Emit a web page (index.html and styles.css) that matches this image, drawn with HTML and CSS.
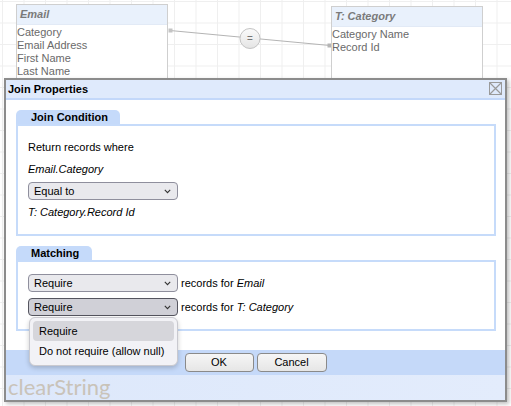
FILE: index.html
```html
<!DOCTYPE html>
<html>
<head>
<meta charset="utf-8">
<link rel="stylesheet" href="styles.css">
</head>
<body>
<div class="canvas">
  <svg class="links" width="511" height="406" viewBox="0 0 511 406">
    <defs>
      <linearGradient id="cg" x1="0" y1="0" x2="0" y2="1">
        <stop offset="0" stop-color="#fbfbfb"/>
        <stop offset="1" stop-color="#e4e4e4"/>
      </linearGradient>
    </defs>
    <line x1="170" y1="30.5" x2="330" y2="45.5" stroke="#b4b4b4" stroke-width="1.2"/>
    <rect x="168.5" y="28.5" width="4" height="4" fill="#c4c4c4"/>
    <rect x="327.5" y="43.5" width="4" height="4" fill="#b4b4b4"/>
    <circle cx="250" cy="38.5" r="10" fill="url(#cg)" stroke="#c4c4c4" stroke-width="1"/>
    <text x="250" y="42" text-anchor="middle" class="eq">=</text>
  </svg>
  <div class="table t-email">
    <div class="thead">Email</div>
    <div class="trows">
      <div>Category</div>
      <div>Email Address</div>
      <div>First Name</div>
      <div>Last Name</div>
    </div>
  </div>
  <div class="table t-cat">
    <div class="thead">T: Category</div>
    <div class="trows">
      <div>Category Name</div>
      <div>Record Id</div>
    </div>
  </div>
</div>

<div class="dialog">
  <div class="titlebar">
    <span class="title">Join Properties</span>
    <svg class="close" width="13" height="13" viewBox="0 0 13 13">
      <rect x="0.5" y="0.5" width="12" height="12" fill="none" stroke="#9a9a9a"/>
      <path d="M1 1 L12 12 M12 1 L1 12" stroke="#9a9a9a" stroke-width="1.2"/>
    </svg>
  </div>
  <div class="body">
    <div class="section">
      <div class="tab tab-cond">Join Condition</div>
      <div class="box box-cond">
        <div class="line">Return records where</div>
        <div class="line it l2">Email.Category</div>
        <div class="select s-cond"><span>Equal to</span><svg class="chev" width="7" height="5" viewBox="0 0 7 5"><path d="M0.8 0.8 L3.5 3.6 L6.2 0.8" fill="none" stroke="#333" stroke-width="1.1"/></svg></div>
        <div class="line it l4">T: Category.Record Id</div>
      </div>
    </div>
    <div class="section sec2">
      <div class="tab tab-match">Matching</div>
      <div class="box box-match">
        <div class="mrow">
          <div class="select"><span>Require</span><svg class="chev" width="7" height="5" viewBox="0 0 7 5"><path d="M0.8 0.8 L3.5 3.6 L6.2 0.8" fill="none" stroke="#333" stroke-width="1.1"/></svg></div>
          <span class="rec">records for <i>Email</i></span>
        </div>
        <div class="mrow">
          <div class="select open"><span>Require</span><svg class="chev" width="7" height="5" viewBox="0 0 7 5"><path d="M0.8 0.8 L3.5 3.6 L6.2 0.8" fill="none" stroke="#333" stroke-width="1.1"/></svg></div>
          <span class="rec">records for <i>T: Category</i></span>
        </div>
      </div>
    </div>
  </div>
  <div class="buttons">
    <div class="btn ok">OK</div>
    <div class="btn cancel">Cancel</div>
  </div>
  <div class="brand">clearString</div>
  <div class="popup">
    <div class="opt sel">Require</div>
    <div class="opt">Do not require (allow null)</div>
  </div>
</div>
</body>
</html>
```

FILE: styles.css
```css
html, body {
  margin: 0;
  padding: 0;
}
body {
  width: 511px;
  height: 406px;
  overflow: hidden;
  position: relative;
  background-color: #ffffff;
  background-image:
    linear-gradient(#efefef 1px, transparent 1px),
    linear-gradient(90deg, #efefef 1px, transparent 1px);
  background-size: 21.5px 21.5px;
  background-position: 2px 1px;
  font-family: "Liberation Sans", Arial, sans-serif;
  font-size: 11px;
  color: #000;
}
.canvas {
  position: absolute;
  left: 0;
  top: 0;
  width: 511px;
  height: 406px;
}
.links {
  position: absolute;
  left: 0;
  top: 0;
}
.eq {
  font-family: "Liberation Sans", Arial, sans-serif;
  font-size: 10px;
  fill: #777;
}
.table {
  position: absolute;
  background: #fff;
  border: 1px solid #cfcfcf;
  color: #6a6a6a;
}
.t-email {
  left: 16px;
  top: 4px;
  width: 150px;
  height: 120px;
}
.t-cat {
  left: 331px;
  top: 6px;
  width: 150px;
  height: 120px;
}
.thead {
  height: 19px;
  line-height: 19px;
  background: #e9f1fc;
  border-bottom: 1px solid #e2eaf6;
  font-weight: bold;
  font-style: italic;
  color: #7a7a7a;
  padding-left: 3px;
}
.trows {
  padding-top: 1px;
  line-height: 13px;
}

.dialog {
  position: absolute;
  left: 4px;
  top: 78px;
  width: 499px;
  border: 2px solid #8c8c8c;
  background: #fff;
  box-shadow: 2px 2px 4px rgba(0, 0, 0, 0.25);
}
.titlebar {
  height: 18px;
  background: #dfeafc;
  border-bottom: 2px solid #c3d8fa;
  display: flex;
  align-items: center;
  justify-content: space-between;
  padding: 0 3px 0 2px;
}
.title {
  font-weight: bold;
}
.close {
  display: block;
  margin-top: -1px;
}
.body {
  padding: 10px 9px 19px 10px;
}
.sec2 {
  margin-top: 10px;
}
.tab {
  height: 14px;
  line-height: 15px;
  background: #c5dafa;
  border-radius: 5px 5px 0 0;
  font-weight: bold;
  padding-left: 15px;
  box-sizing: border-box;
}
.tab-cond {
  width: 104px;
}
.tab-match {
  width: 76px;
}
.box {
  border: 2px solid #c6dbfa;
  padding: 0 10px;
}
.box-cond {
  height: 94px;
  padding-top: 14px;
}
.line {
  height: 14px;
  line-height: 14px;
}
.it {
  font-style: italic;
}
.l2 {
  margin-top: 8px;
}
.s-cond {
  margin-top: 6px;
}
.l4 {
  margin-top: 5px;
}
.select {
  width: 150px;
  height: 18px;
  box-sizing: border-box;
  border: 1px solid #8f8f9d;
  border-radius: 4px;
  background: #e9e9ed;
  display: flex;
  align-items: center;
  justify-content: space-between;
  padding: 0 6px 0 5px;
}
.select.open {
  background: #d0d0d7;
  border-color: #55555f;
}
.chev {
  display: block;
}
.box-match {
  height: 55px;
  padding-top: 12px;
}
.mrow {
  display: flex;
  align-items: center;
  gap: 3px;
  height: 18px;
}
.mrow + .mrow {
  margin-top: 6px;
}
.buttons {
  height: 25px;
  background: #c5d9f9;
  display: flex;
  justify-content: center;
  align-items: center;
  gap: 3px;
}
.btn {
  height: 19px;
  box-sizing: border-box;
  border: 1px solid #8a8a8a;
  border-radius: 4px;
  background: linear-gradient(#f6f6f6, #e6e6e6);
  text-align: center;
  line-height: 17px;
}
.ok {
  width: 69px;
}
.cancel {
  width: 70px;
}
.brand {
  height: 25px;
  line-height: 24px;
  overflow: hidden;
  background: linear-gradient(90deg, #dde8fb, #e3ecfc);
  font-family: Lato, "Open Sans", sans-serif;
  font-size: 22px;
  color: #c9c3b9;
  padding-left: 2px;
}
.popup {
  position: absolute;
  left: 23px;
  top: 237px;
  width: 149px;
  box-sizing: border-box;
  background: #f2f2f6;
  border: 1px solid #c9c9cf;
  border-radius: 6px;
  box-shadow: 0 2px 5px rgba(0, 0, 0, 0.2);
  padding: 3px 3px 4px 3px;
}
.opt {
  height: 20px;
  line-height: 20px;
  padding-left: 6px;
  border-radius: 4px;
}
.opt.sel {
  background: #d6d6db;
}
```
